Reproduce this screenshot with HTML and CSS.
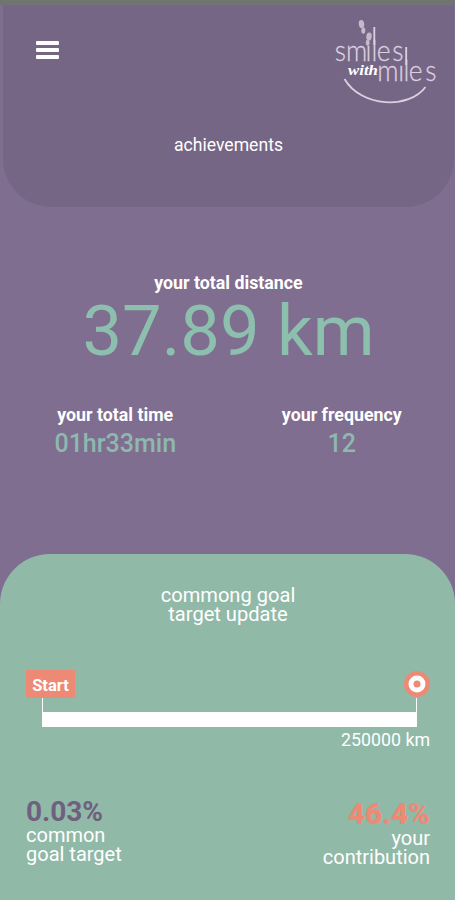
FILE: index.html
```html
<!DOCTYPE html>
<html lang="en">
<head>
  <meta charset="UTF-8">
  <meta name="viewport" content="width=device-width, initial-scale=1.0">
  <title>Smiles with Miles - achievements</title>
  <link rel="stylesheet" href="styles.css">
</head>

<body>

<header class="header">
  <div class="topbar">
    <button class="menu" type="button" aria-label="Menu">
      <span></span><span></span><span></span>
    </button>
    <svg class="logo" viewBox="0 0 110 90" role="img" aria-label="smiles with miles">
      <!-- footprints -->
      <g class="logo-foot">
        <ellipse cx="29.5" cy="9" rx="2.7" ry="4" transform="rotate(-8 29.5 9)"/>
        <ellipse cx="31.3" cy="15.5" rx="2" ry="3.2"/>
        <ellipse cx="37" cy="21.5" rx="2.7" ry="4" transform="rotate(8 37 21.5)"/>
        <ellipse cx="35.7" cy="27.8" rx="1.9" ry="3"/>
      </g>
      <text class="logo-light" transform="scale(.88 1)" x="3.2 16 38 45 51 68.6" y="46.5">smıles</text>
      <text class="logo-with" x="16" y="59.5" textLength="30" lengthAdjust="spacingAndGlyphs">with</text>
      <text class="logo-light" transform="scale(.88 1)" x="51.5 75.2 81.2 87.3 106" y="66.5">mıles</text>
      <path class="logo-line" d="M42.3 12v18M74.2 32v18"/>
      <path class="logo-smile" d="M12.5 64c17 29 65 30 81 8"/>
    </svg>
  </div>
  <h1 class="title">achievements</h1>
</header>

<main class="stats">
  <section class="distance">
    <h2>your total distance</h2>
    <p>37.89 km</p>
  </section>
  <div class="stats-row">
    <section class="stat">
      <h2>your total time</h2>
      <p>01hr33min</p>
    </section>
    <section class="stat">
      <h2>your frequency</h2>
      <p>12</p>
    </section>
  </div>
</main>

<section class="goal">
  <h2 class="goal-title">commong goal<br>target update</h2>
  <div class="track-ends">
    <span class="start">Start</span>
    <svg class="target" viewBox="0 0 26 26">
      <circle cx="13" cy="13" r="13" fill="#ec8a75"/>
      <circle cx="13" cy="13" r="6" fill="none" stroke="#fff" stroke-width="5"/>
    </svg>
  </div>
  <div class="track"><div class="bar"></div></div>
  <p class="total">250000 km</p>
  <div class="results">
    <div class="result">
      <strong class="common">0.03%</strong>
      <p>common<br>goal target</p>
    </div>
    <div class="result right">
      <strong class="yours">46.4%</strong>
      <p>your<br>contribution</p>
    </div>
  </div>
</section>

</body>
</html>
```
FILE: styles.css
```css
* {
  box-sizing: border-box;
}
body {
  margin: 0;
  height: 900px;
  display: flex;
  flex-direction: column;
  background: #806e90;
  border-top: 5px solid #727472;
  font-family: Roboto, sans-serif;
  color: #fff;
  overflow: hidden;
}
h1, h2, p {
  margin: 0;
  font-weight: 400;
}
.header {
  height: 202px;
  margin: 0 1px 0 3px;
  background: #766685;
  border-radius: 0 0 48px 48px;
}
.topbar {
  display: flex;
  justify-content: space-between;
  height: 120px;
  padding: 10px 12px 0 33px;
}
.menu {
  display: flex;
  flex-direction: column;
  gap: 3px;
  width: 23px;
  margin-top: 26px;
  padding: 0;
  border: none;
  background: none;
}
.menu span {
  width: 23px;
  height: 4px;
  border-radius: 1px;
  background: #fff;
}
.logo {
  width: 110px;
  height: 90px;
}
.logo-light {
  font-family: Lato, sans-serif;
  font-weight: 300;
  font-size: 30px;
  fill: #dccfe0;
  stroke: #dccfe0;
  stroke-width: .3;
}
.logo-with {
  font-family: "Liberation Serif", serif;
  font-weight: 700;
  font-style: italic;
  font-size: 15px;
  fill: #fff;
}
.logo-foot {
  fill: #c5b8cb;
}
.logo-line, .logo-smile {
  fill: none;
  stroke: #dccfe0;
  stroke-width: 1.8;
}
.title {
  text-align: center;
  font-size: 17.6px;
  line-height: 41px;
}
.stats {
  height: 347px;
  padding: 65px 0 0 2px;
  text-align: center;
}
.stats h2 {
  font-size: 17.8px;
  font-weight: 700;
  line-height: 21px;
}
.distance p {
  padding-top: 1px;
  font-size: 70.5px;
  line-height: 75px;
  color: #8dbfae;
}
.stats-row {
  display: grid;
  grid-template-columns: 1fr 1fr;
  margin-top: 35px;
}
.stat p {
  margin-top: 4px;
  font-size: 25px;
  font-weight: 500;
  line-height: 30px;
  color: #8db9ae;
}
.goal {
  flex: 1;
  padding: 32px 25px 0 26px;
  background: #91b9a8;
  border-radius: 50px 50px 0 0;
}
.goal-title {
  text-align: center;
  font-size: 20.1px;
  line-height: 19px;
}
.track-ends {
  display: flex;
  justify-content: space-between;
  margin-top: 46px;
}
.start {
  width: 49px;
  height: 28px;
  background: #ec8a75;
  font-size: 16.5px;
  font-weight: 700;
  line-height: 31px;
  text-align: center;
}
.target {
  width: 26px;
  height: 26px;
  margin-top: 1px;
}
.track {
  height: 29px;
  margin: 0 13px 0 16px;
  padding-top: 14px;
  border: solid #fff;
  border-width: 0 1px;
}
.bar {
  height: 15px;
  background: #fff;
}
.total {
  margin-top: 2px;
  font-size: 17.8px;
  line-height: 22px;
  text-align: right;
}
.results {
  display: flex;
  justify-content: space-between;
  margin-top: 45px;
}
.result strong {
  display: block;
  font-size: 28px;
  line-height: 32px;
}
.result p {
  margin-top: -2px;
  font-size: 20px;
  line-height: 19px;
}
.right {
  padding-top: 2px;
  text-align: right;
}
.right p {
  margin-top: -1px;
}
.common {
  color: #70607f;
}
.result .yours {
  font-size: 29.5px;
  font-weight: 900;
  color: #ec8a75;
}
```
